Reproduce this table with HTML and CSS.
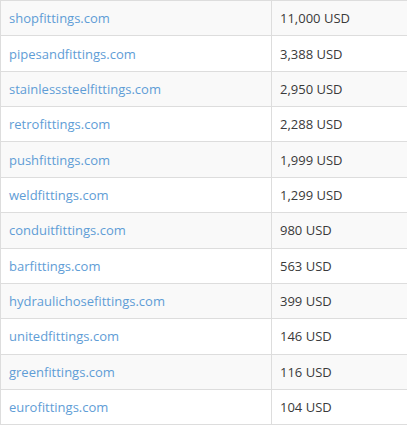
FILE: index.html
```html
<!DOCTYPE html>
<html>
<head>
<meta charset="utf-8">
<link rel="stylesheet" href="styles.css">
</head>
<body>
<table class="prices">
<tbody>
<tr><td class="name"><a href="#">shopfittings.com</a></td><td class="price">11,000 USD</td></tr>
<tr><td class="name"><a href="#">pipesandfittings.com</a></td><td class="price">3,388 USD</td></tr>
<tr><td class="name"><a href="#">stainlesssteelfittings.com</a></td><td class="price">2,950 USD</td></tr>
<tr><td class="name"><a href="#">retrofittings.com</a></td><td class="price">2,288 USD</td></tr>
<tr><td class="name"><a href="#">pushfittings.com</a></td><td class="price">1,999 USD</td></tr>
<tr><td class="name"><a href="#">weldfittings.com</a></td><td class="price">1,299 USD</td></tr>
<tr><td class="name"><a href="#">conduitfittings.com</a></td><td class="price">980 USD</td></tr>
<tr><td class="name"><a href="#">barfittings.com</a></td><td class="price">563 USD</td></tr>
<tr><td class="name"><a href="#">hydraulichosefittings.com</a></td><td class="price">399 USD</td></tr>
<tr><td class="name"><a href="#">unitedfittings.com</a></td><td class="price">146 USD</td></tr>
<tr><td class="name"><a href="#">greenfittings.com</a></td><td class="price">116 USD</td></tr>
<tr><td class="name"><a href="#">eurofittings.com</a></td><td class="price">104 USD</td></tr>
</tbody>
</table>
</body>
</html>
```
FILE: styles.css
```css
html, body {
  margin: 0;
  padding: 0;
  background: #fff;
  overflow: hidden;
}
body {
  font-family: "Open Sans", "Liberation Sans", sans-serif;
  font-size: 13px;
  color: #3a3a3a;
}
.prices {
  border-collapse: collapse;
  width: 100%;
  border-left: 1px solid #ddd;
}
.prices td {
  border-top: 1px solid #ddd;
  border-bottom: 1px solid #ddd;
  padding: 8px;
  height: 18.36px;
  line-height: 18px;
  vertical-align: middle;
  white-space: nowrap;
}
.prices tr:nth-child(odd) td {
  background: #f9f9f9;
}
.prices td.name {
  width: 254px;
  border-right: 1px solid #ddd;
}
.prices a {
  color: #5f9dd6;
  text-decoration: none;
}
```
